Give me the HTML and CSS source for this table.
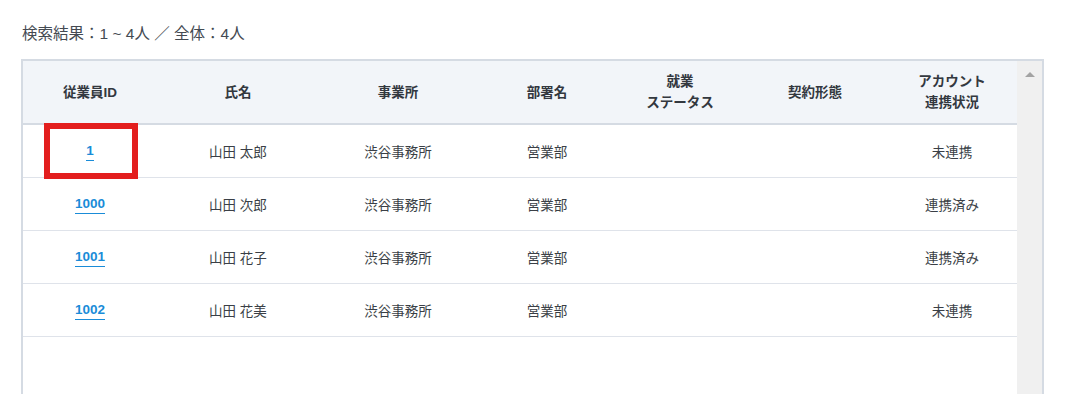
FILE: index.html
```html
<!DOCTYPE html>
<html lang="ja">
<head>
    <meta charset="UTF-8">
    <meta name="viewport" content="width=device-width, initial-scale=1.0">
    <title>従業員一覧</title>
    <link rel="stylesheet" href="styles.css">
</head>
<body>
    <p class="result-count">検索結果：1 ~ 4人 ／ 全体：4人</p>

    <div class="list-frame">
        <div class="list-scroll">
            <table class="employee-table">
                <colgroup>
                    <col style="width: 134px">
                    <col style="width: 162px">
                    <col style="width: 158px">
                    <col style="width: 140px">
                    <col style="width: 126px">
                    <col style="width: 144px">
                    <col style="width: 130px">
                </colgroup>
                <thead>
                    <tr>
                        <th>従業員ID</th>
                        <th>氏名</th>
                        <th>事業所</th>
                        <th>部署名</th>
                        <th>就業<br>ステータス</th>
                        <th>契約形態</th>
                        <th>アカウント<br>連携状況</th>
                    </tr>
                </thead>
                <tbody>
                    <tr>
                        <td class="id-cell">
                            <a href="#" class="emp-link">1</a>
                            <span class="highlight-box"></span>
                        </td>
                        <td>山田 太郎</td>
                        <td>渋谷事務所</td>
                        <td>営業部</td>
                        <td></td>
                        <td></td>
                        <td>未連携</td>
                    </tr>
                    <tr>
                        <td class="id-cell"><a href="#" class="emp-link">1000</a></td>
                        <td>山田 次郎</td>
                        <td>渋谷事務所</td>
                        <td>営業部</td>
                        <td></td>
                        <td></td>
                        <td>連携済み</td>
                    </tr>
                    <tr>
                        <td class="id-cell"><a href="#" class="emp-link">1001</a></td>
                        <td>山田 花子</td>
                        <td>渋谷事務所</td>
                        <td>営業部</td>
                        <td></td>
                        <td></td>
                        <td>連携済み</td>
                    </tr>
                    <tr>
                        <td class="id-cell"><a href="#" class="emp-link">1002</a></td>
                        <td>山田 花美</td>
                        <td>渋谷事務所</td>
                        <td>営業部</td>
                        <td></td>
                        <td></td>
                        <td>未連携</td>
                    </tr>
                </tbody>
            </table>
        </div>
        <div class="scroll-track">
            <span class="scroll-arrow"></span>
        </div>
    </div>
</body>
</html>
```

FILE: styles.css
```css
:root {
    --text-color: #3a3f46;
    --head-bg: #f2f5f9;
    --frame-border: #d5dbe3;
    --row-border: #dfe3ea;
    --link-color: #1a8cd8;
    --track-bg: #f0f0f0;
}

* {
    margin: 0;
    padding: 0;
    box-sizing: border-box;
}

html, body {
    height: 100%;
    overflow: hidden;
}

body {
    background-color: #ffffff;
    color: var(--text-color);
    font-family: 'Liberation Sans', 'Noto Sans CJK JP', sans-serif;
    font-size: 13.5px;
    padding: 23px 21px 0 21px;
}

.result-count {
    font-size: 15.5px;
    line-height: 22px;
    margin-left: 1px;
    margin-bottom: 14px;
    color: #444a52;
}

.list-frame {
    display: flex;
    width: 1023px;
    height: 360px;
    border: 2px solid var(--frame-border);
    border-bottom: none;
}

.list-scroll {
    width: 994px;
}

.employee-table {
    width: 994px;
    table-layout: fixed;
    border-collapse: collapse;
}

.employee-table th {
    background-color: var(--head-bg);
    height: 63px;
    font-weight: bold;
    line-height: 21px;
    text-align: center;
    border-bottom: 2px solid var(--frame-border);
    color: #33383f;
}

.employee-table td {
    height: 53px;
    text-align: center;
    border-bottom: 1px solid var(--row-border);
}

.id-cell {
    position: relative;
}

.emp-link {
    color: var(--link-color);
    font-weight: bold;
    text-decoration: none;
    border-bottom: 1px solid var(--link-color);
    padding-bottom: 2px;
}

/* red marker drawn over the first ID cell */
.highlight-box {
    position: absolute;
    left: 21px;
    top: -2px;
    width: 94px;
    height: 56px;
    border: 6px solid #e31e1e;
}

.scroll-track {
    width: 25px;
    background-color: var(--track-bg);
    display: flex;
    justify-content: center;
    padding-top: 11px;
}

.scroll-arrow {
    width: 0;
    height: 0;
    border-left: 5px solid transparent;
    border-right: 5px solid transparent;
    border-bottom: 5px solid #a3a3a3;
}
```
